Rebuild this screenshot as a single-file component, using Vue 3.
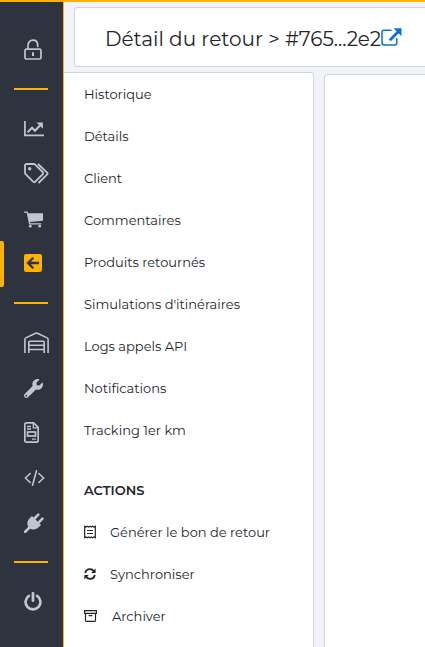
<script setup>
const links = [
  'Historique',
  'Détails',
  'Client',
  'Commentaires',
  'Produits retournés',
  "Simulations d'itinéraires",
  'Logs appels API',
  'Notifications',
  'Tracking 1er km'
]
</script>

<template>
  <div class="app">
    <nav class="sidebar">
      <svg class="icon lock" width="18" height="21" viewBox="0 0 18 21"><g fill="none" stroke="currentColor" stroke-width="1.7"><rect x="1" y="10.2" width="16" height="9.8" rx="1.6" /><path d="M4 10V6.4C4 3.3 6 1.2 8.9 1.2s4.8 2.1 4.8 5V7.5" stroke-linecap="round" /><path d="M9 13.2v3.8" stroke-width="2" /></g></svg>
      <hr class="divider first">
      <svg class="icon chart" width="20" height="16" viewBox="0 0 20 16"><path d="M.9 0v14.3H20" fill="none" stroke="currentColor" stroke-width="1.7" /><path d="M3.7 11.2L8 6.7l3 3 5-5.2" fill="none" stroke="currentColor" stroke-width="2" /><path d="M12.5 1.5h6.4v6.3z" fill="currentColor" /></svg>
      <svg class="icon tags" width="25" height="21" viewBox="0 0 25 21"><g fill="none" stroke="currentColor" stroke-width="1.8" stroke-linejoin="round"><path d="M2.4 1h7.4c.6 0 1 .2 1.4.6l7.4 7.4c.7.7.7 1.6 0 2.3l-7.3 7.4c-.6.7-1.5.7-2.2 0L1.6 11.2C1.1 10.7 1 10.2 1 9.7V2.4C1 1.5 1.6 1 2.4 1z" /><path d="M14 1l9.2 8.6c.6.6.6 1.1 0 1.7L14.5 20" /></g><circle cx="5.7" cy="5.7" r="1.7" fill="currentColor" /></svg>
      <svg class="icon cart" width="19" height="17" viewBox="0 0 19 17"><path d="M0 .5h3.7l.4 1.7H19v7.6L6 11l.3 1.3h10.9v1.3H5.1L2.7 1.8H0z" fill="currentColor" /><circle cx="6.3" cy="15.2" r="1.4" fill="currentColor" /><circle cx="15.7" cy="15.2" r="1.4" fill="currentColor" /></svg>
      <div class="active">
        <svg class="icon" width="18" height="18" viewBox="0 0 18 18"><rect width="18" height="18" rx="2.2" fill="currentColor" /><path d="M9.3 3.8L4 9l5.3 5.2M4.4 9H15" fill="none" stroke="#2e3340" stroke-width="2.3" /></svg>
      </div>
      <hr class="divider second">
      <svg class="icon warehouse" width="25" height="21" viewBox="0 0 25 21"><g fill="none" stroke="currentColor" stroke-width="1.6"><path d="M.9 21V7.4c0-.7.3-1.2.9-1.5L11.6 1.2c.6-.3 1.2-.3 1.8 0l9.8 4.7c.6.3.9.8.9 1.5V21" /><path d="M4.8 21V10.2c0-.6.4-.9.9-.9h13.6c.5 0 .9.3.9.9V21M5 13.2h15M5 17.5h15" /></g></svg>
      <svg class="icon wrench" width="19" height="19" viewBox="0 0 512 512"><path fill="currentColor" d="M507.7 109.1c-2.2-9-13.5-12.1-20-5.5l-74.4 74.4-67.9-11.3-11.3-67.9 74.4-74.4c6.6-6.6 3.4-17.9-5.7-20.2-47.4-11.7-99.6.9-136.6 37.9-39.6 39.6-50.5 97.1-34.1 147.2L18.7 402.8c-25 25-25 65.5 0 90.5s65.5 25 90.5 0l213.2-213.2c50.1 16.7 107.5 5.7 147.4-34.2 37.1-37.1 49.7-89.3 37.9-136.8zM64 472c-13.3 0-24-10.7-24-24 0-13.3 10.7-24 24-24s24 10.7 24 24c0 13.3-10.7 24-24 24z" /></svg>
      <svg class="icon file" width="15" height="21" viewBox="0 0 15 21"><g fill="none" stroke="currentColor" stroke-width="1.7"><path d="M2.4.9h7.2L14.2 5.5v13c0 1-.6 1.6-1.6 1.6H2.4c-1 0-1.6-.6-1.6-1.6V2.5C.8 1.5 1.4.9 2.4.9z" /><path d="M9.3 1v4.8H14M3 4.5h4M3 7h4M8 17.2h4" stroke-width="1.3" /><rect x="3.5" y="10" width="8" height="4" /></g></svg>
      <svg class="icon code" width="21" height="16" viewBox="0 0 21 16"><path d="M6.2 3.5L1.3 8l4.9 4.5M14.8 3.5L19.7 8l-4.9 4.5M12.5.8L8.5 15.2" fill="none" stroke="currentColor" stroke-width="1.6" stroke-linecap="round" stroke-linejoin="round" /></svg>
      <svg class="icon plug" width="20" height="20" viewBox="0 0 20 20"><path d="M1 19l5-5M10.5 5.5l3.8-3.9M14.6 9.6l3.8-3.9" fill="none" stroke="currentColor" stroke-width="2.6" stroke-linecap="round" /><path d="M7.2 3.7c.5-.5 1-.4 1.5 0l7.7 7.6c.5.5.5 1 0 1.4l-1.3 1.1c-2.4 2.7-5.6 3.4-8.3 2.2l-2.8-2.8C2.6 10.5 3.4 7 6 4.9z" fill="currentColor" /></svg>
      <hr class="divider third">
      <svg class="icon power" width="18" height="19" viewBox="0 0 18 19"><path d="M4.9 3.9A7.4 7.4 0 1 0 13.1 3.9" fill="none" stroke="currentColor" stroke-width="2.7" stroke-linecap="round" /><path d="M9 1.3v7.4" stroke="currentColor" stroke-width="2.8" stroke-linecap="round" /></svg>
    </nav>

    <main class="page">
      <header class="title-card">
        <h1>Détail du retour &gt; #765...2e2</h1>
        <svg class="external" width="21" height="18" viewBox="0 0 21 18"><path d="M10.5 2.2H3.2C1.8 2.2 1 3 1 4.3v10.4c0 1.4.8 2.2 2.2 2.2h10.4c1.4 0 2.2-.8 2.2-2.2V10" fill="none" stroke="currentColor" stroke-width="1.5" /><path d="M8.8 12.2L17.5 3.5" stroke="currentColor" stroke-width="2.8" /><path d="M12.5.2h8v8z" fill="currentColor" /></svg>
      </header>
      <div class="columns">
        <aside class="panel">
          <a v-for="link in links" :key="link" class="row">{{ link }}</a>
          <h2>ACTIONS</h2>
          <a class="row action generate">
            <svg width="12" height="14" viewBox="0 0 12 14"><path d="M.7 1.2l1.3.8 1.3-.8 1.3.8L6 1.2l1.3.8 1.3-.8 1.3.8 1.4-.8v11.6l-1.4-.8-1.3.8-1.3-.8-1.3.8-1.4-.8-1.3.8-1.3-.8-1.3.8z" fill="none" stroke="currentColor" stroke-width="1.2" /><path d="M3 5.5h6M3 8.5h6" stroke="currentColor" stroke-width="1.1" /></svg>
            <span>Générer le bon de retour</span>
          </a>
          <a class="row action sync">
            <svg width="12" height="12" viewBox="0 0 12 12"><path d="M1.2 5C1.7 2.5 3.6 1.2 6 1.2c1.6 0 2.9.7 3.8 1.9M10.8 7c-.5 2.5-2.4 3.8-4.8 3.8-1.6 0-2.9-.7-3.8-1.9" fill="none" stroke="currentColor" stroke-width="1.8" /><path d="M11.6.5v4.4H7.2zM.4 11.5V7.1h4.4z" fill="currentColor" /></svg>
            <span>Synchroniser</span>
          </a>
          <a class="row action archive">
            <svg width="13" height="12" viewBox="0 0 13 12"><path d="M.6.7h11.8v2.6H.6zM1.5 3.3v7.2c0 .5.3.8.8.8h8.4c.5 0 .8-.3.8-.8V3.3M4.7 5.7h3.6" fill="none" stroke="currentColor" stroke-width="1.2" /></svg>
            <span>Archiver</span>
          </a>
        </aside>
        <section class="content"></section>
      </div>
    </main>
  </div>
</template>

<style>
body {
  overflow: hidden;
}
</style>

<style scoped>
.app {
  box-sizing: border-box;
  display: flex;
  width: 425px;
  height: 647px;
  overflow: hidden;
  border-top: 2px solid #ffb300;
  background: #f1f3f8;
  color: #212529;
  font-family: Montserrat, Inter, sans-serif;
}
.sidebar {
  box-sizing: border-box;
  display: flex;
  flex: none;
  flex-direction: column;
  width: 64px;
  padding-top: 37px;
  background: #2e3340;
  border-right: 1px solid #ffb300;
  color: #c0c5d0;
}
.icon {
  display: block;
  flex: none;
  margin-left: 24px;
}
.divider {
  flex: none;
  width: 34px;
  height: 2px;
  margin: 0 0 0 14px;
  border: 0;
  background: #ffb300;
}
.first { margin-top: 28px; }
.chart { margin-top: 31px; }
.tags { margin-top: 26px; }
.cart { margin-top: 27px; }
.active {
  display: flex;
  flex: none;
  align-items: center;
  height: 46px;
  margin-top: 12px;
  color: #ffb300;
}
.active::before {
  content: '';
  align-self: stretch;
  width: 4px;
  margin-top: 1px;
  margin-bottom: -1px;
  border-radius: 0 2px 2px 0;
  background: #ffb300;
}
.active .icon { margin-left: 20px; }
.second { margin-top: 16px; }
.warehouse { margin-top: 28px; }
.wrench { margin-top: 26px; }
.file { margin-top: 24px; }
.code { margin-top: 27px; }
.plug { margin-top: 27px; }
.third { margin-top: 28px; }
.power { margin-top: 29px; }
.page {
  display: flex;
  flex: 1;
  flex-direction: column;
  min-width: 0;
  padding-top: 5px;
}
.title-card {
  box-sizing: border-box;
  display: flex;
  flex: none;
  align-items: center;
  height: 60px;
  margin-left: 10px;
  padding-left: 30px;
  border: 1px solid #ced6e4;
  border-right: 0;
  border-radius: 3px 0 0 3px;
  background: #fff;
}
h1 {
  width: 276px;
  margin: 0;
  padding-top: 3px;
  font-size: 20px;
  font-weight: 400;
  line-height: 28px;
  white-space: nowrap;
}
.external {
  flex: none;
  color: #0870d8;
}
.columns {
  display: flex;
  flex: 1;
  gap: 10px;
  padding-top: 5px;
}
.panel {
  box-sizing: border-box;
  width: 250px;
  padding-left: 20px;
  border: 1px solid #ced6e4;
  border-width: 1px 1px 0 0;
  border-radius: 0 4px 0 0;
  background: #fff;
}
.row {
  display: flex;
  align-items: center;
  height: 42px;
  font-size: 13px;
  white-space: nowrap;
}
h2 {
  margin: 28px 0 10px;
  font-size: 13px;
  font-weight: 600;
  line-height: 22px;
}
.action svg { flex: none; }
.generate { gap: 14px; }
.sync { gap: 14px; }
.archive { gap: 15px; }
.content {
  flex: 1;
  margin-top: 2px;
  border: 1px solid #ced6e4;
  border-width: 1px 0 0 1px;
  border-radius: 4px 0 0 0;
  background: #fff;
}
</style>
